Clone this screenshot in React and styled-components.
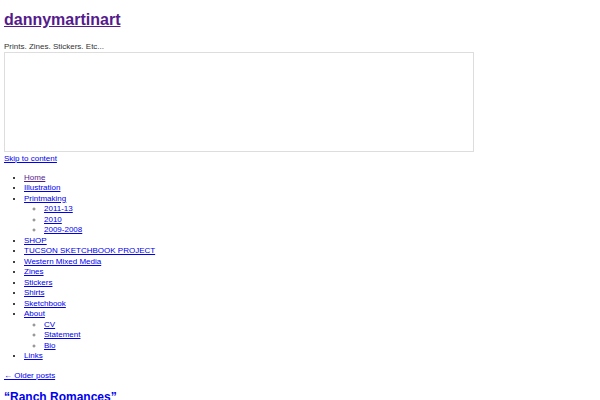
import React from 'react'
import styled, { createGlobalStyle } from 'styled-components'

const GlobalStyle = createGlobalStyle`
body {
  margin: 0;
  background: #fff;
  font-family: "Liberation Sans", Arial, sans-serif;
  color: #222;
}
`

const Page = styled.div`
display: flex;
flex-direction: column;
align-items: flex-start;
padding: 0 4px;
`

const SiteTitle = styled.a`
margin-top: 10px;
font-size: 16px;
line-height: 20px;
font-weight: bold;
color: #551a8b;
`

const Tagline = styled.p`
margin: 12px 0 0;
font-size: 8px;
line-height: 10px;
color: #333;
`

const HeaderBox = styled.div`
width: 468px;
height: 98px;
border: 1px solid #ddd;
`

const NavLink = styled.a`
font-size: 8px;
line-height: 10.5px;
color: ${p => (p.$visited ? '#551a8b' : '#0000ee')};
`

const SkipLink = styled(NavLink)`
margin-top: 2px;
`

const Menu = styled.ul`
margin: ${p => (p.$nested ? '0' : '8px 0 0')};
padding-left: 20px;
list-style-type: ${p => (p.$nested ? 'circle' : 'disc')};
font-size: 8px;
line-height: 10.5px;
`

const Item = styled.li`
&::marker {
  color: ${p => (p.$sub ? '#777' : '#000')};
}
`

const OlderPosts = styled(NavLink)`
margin-top: 9px;
`

const PostTitle = styled.a`
margin-top: 9px;
font-size: 12px;
line-height: 14px;
font-weight: bold;
color: #0000ee;
text-decoration: none;
`

const menu = [
  { label: 'Home', visited: true },
  { label: 'Illustration' },
  { label: 'Printmaking', children: ['2011-13', '2010', '2009-2008'] },
  { label: 'SHOP' },
  { label: 'TUCSON SKETCHBOOK PROJECT' },
  { label: 'Western Mixed Media' },
  { label: 'Zines' },
  { label: 'Stickers' },
  { label: 'Shirts' },
  { label: 'Sketchbook' },
  { label: 'About', children: ['CV', 'Statement', 'Bio'] },
  { label: 'Links' },
]

const App = () => {
  return (
    <Page>
      <GlobalStyle />
      <SiteTitle href="#">dannymartinart</SiteTitle>
      <Tagline>Prints. Zines. Stickers. Etc...</Tagline>
      <HeaderBox />
      <SkipLink href="#">Skip to content</SkipLink>
      <Menu>
        {menu.map(m => (
          <Item key={m.label}>
            <NavLink href="#" $visited={m.visited}>{m.label}</NavLink>
            {m.children && (
              <Menu $nested>
                {m.children.map(c => (
                  <Item key={c} $sub>
                    <NavLink href="#">{c}</NavLink>
                  </Item>
                ))}
              </Menu>
            )}
          </Item>
        ))}
      </Menu>
      <OlderPosts href="#">← Older posts</OlderPosts>
      <PostTitle href="#">“Ranch Romances”</PostTitle>
    </Page>
  )
}

export default App
